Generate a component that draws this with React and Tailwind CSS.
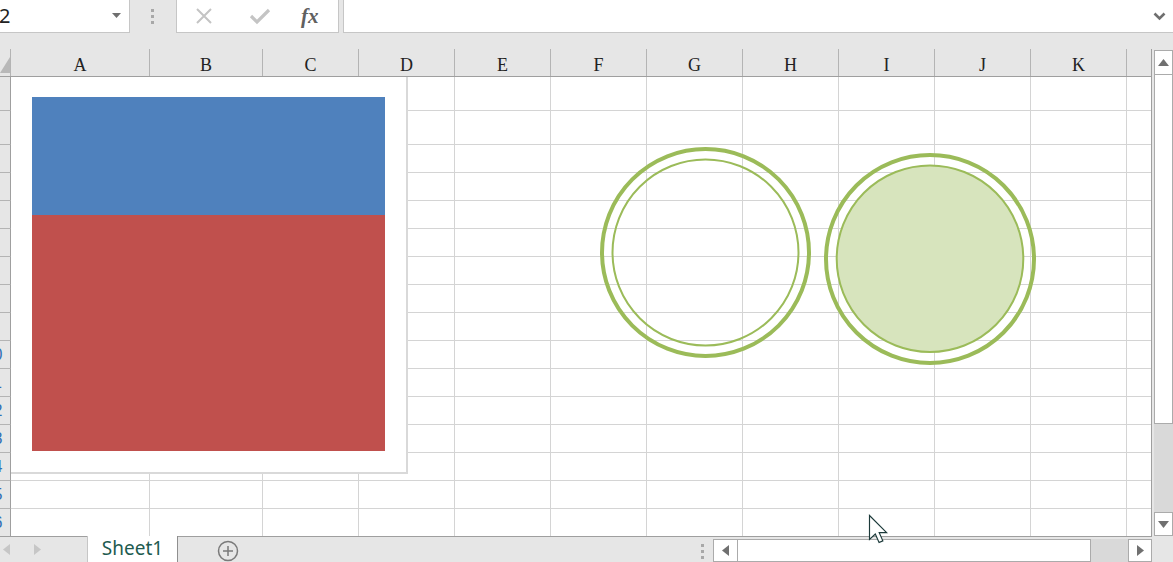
import React from "react";

const COLS = [
  { l: "A", w: 139 },
  { l: "B", w: 113 },
  { l: "C", w: 96 },
  { l: "D", w: 96 },
  { l: "E", w: 96 },
  { l: "F", w: 96 },
  { l: "G", w: 96 },
  { l: "H", w: 96 },
  { l: "I", w: 96 },
  { l: "J", w: 96 },
  { l: "K", w: 96 },
];

const ROWS = Array.from({ length: 16 }, (_, i) => ({ n: i + 1, h: i < 2 ? 34 : 28 }));

function FormulaBar() {
  return (
    <div className="flex h-[33px]">
      <div className="relative flex h-full w-[130px] items-center border-r border-b border-[#c6c6c6] bg-white">
        <span className="-ml-[1px] text-[20px] leading-none text-[#222] font-['Noto_Sans',sans-serif]">2</span>
        <svg className="absolute left-[112px] top-[13px]" width="9" height="6" viewBox="0 0 9 6">
          <path d="M0 0 L9 0 L4.5 5 Z" fill="#6f6f6f" />
        </svg>
      </div>
      <div className="flex w-[46px] flex-col items-center justify-center gap-[3px] pr-[1px]">
        <div className="h-[3px] w-[3px] bg-[#a8a8a8]" />
        <div className="h-[3px] w-[3px] bg-[#a8a8a8]" />
        <div className="h-[3px] w-[3px] bg-[#a8a8a8]" />
      </div>
      <div className="flex h-full w-[163px] items-center border-x border-b border-[#c6c6c6] bg-white">
        <svg className="ml-[17px]" width="20" height="20" viewBox="0 0 20 20">
          <path d="M3 3 L17 17 M17 3 L3 17" stroke="#c4c4c4" strokeWidth="2" fill="none" />
        </svg>
        <svg className="ml-[35px]" width="22" height="20" viewBox="0 0 22 20">
          <path d="M2 10 L8 16 L20 4" stroke="#c4c4c4" strokeWidth="3.2" fill="none" />
        </svg>
        <span className="ml-[30px] text-[21px] italic leading-none text-[#606060] font-['Liberation_Serif',serif] font-bold">fx</span>
      </div>
      <div className="w-[4px]" />
      <div className="relative flex h-full flex-1 items-center border-l border-b border-[#c6c6c6] bg-white">
        <svg className="absolute right-[7px] top-[12px]" width="13" height="9" viewBox="0 0 13 9">
          <path d="M1.5 1.5 L6.5 6.5 L11.5 1.5" stroke="#6f6f6f" strokeWidth="2.6" fill="none" />
        </svg>
      </div>
    </div>
  );
}

function ColumnHeader() {
  return (
    <div className="flex h-[28px] border-b border-[#9f9f9f]">
      <div className="relative h-full w-[11px] border-r border-[#b4b4b4]">
        <svg className="absolute left-0 top-[4px]" width="10" height="20" viewBox="0 0 10 20">
          <path d="M0 20 L10 20 L10 4 Z" fill="#b8b8b8" />
        </svg>
      </div>
      {COLS.map((c) => (
        <div
          key={c.l}
          style={{ width: c.w }}
          className="flex h-full items-center justify-center border-r border-[#b4b4b4] pt-[4px] text-[18px] leading-none text-[#222] font-['Liberation_Serif',serif]"
        >
          {c.l}
        </div>
      ))}
      <div className="h-full flex-1" />
    </div>
  );
}

function Grid() {
  return (
    <div className="h-[459px] overflow-hidden">
      {ROWS.map((r) => (
        <div key={r.n} style={{ height: r.h }} className="flex">
          <div className="flex h-full w-[11px] shrink-0 items-center justify-end overflow-hidden border-r border-b border-r-[#9f9f9f] border-b-[#b4b4b4] bg-[#e6e6e6]">
            <span className="w-[33px] shrink-0 text-center text-[16px] leading-none text-[#2f6fb5] font-['Liberation_Sans',sans-serif]">
              {r.n}
            </span>
          </div>
          {COLS.map((c) => (
            <div
              key={c.l}
              style={{ width: c.w }}
              className="h-full shrink-0 border-r border-b border-[#d4d4d4] bg-white"
            />
          ))}
          <div className="h-full flex-1 border-b border-[#d4d4d4] bg-white" />
        </div>
      ))}
    </div>
  );
}

function VScroll() {
  return (
    <div className="ml-[2px] flex w-[19px] flex-col">
      <div className="h-[1px]" />
      <div className="flex h-[25px] items-center justify-center border border-[#ababab] bg-white">
        <svg width="11" height="7" viewBox="0 0 11 7">
          <path d="M0 7 L11 7 L5.5 0 Z" fill="#707070" />
        </svg>
      </div>
      <div className="h-[349px] border-x border-b border-[#ababab] bg-white" />
      <div className="h-[88px] bg-[#d9d9d9]" />
      <div className="flex h-[24px] items-center justify-center border border-[#ababab] bg-white">
        <svg width="11" height="7" viewBox="0 0 11 7">
          <path d="M0 0 L11 0 L5.5 7 Z" fill="#707070" />
        </svg>
      </div>
    </div>
  );
}

function SheetBar() {
  return (
    <div className="flex h-[26px]">
      <div className="flex w-[87px] items-center border-t border-[#9f9f9f]">
        <svg className="ml-[3px]" width="7" height="11" viewBox="0 0 7 11">
          <path d="M7 0 L7 11 L0 5.5 Z" fill="#c6c6c6" />
        </svg>
        <svg className="ml-[24px]" width="7" height="11" viewBox="0 0 7 11">
          <path d="M0 0 L0 11 L7 5.5 Z" fill="#c6c6c6" />
        </svg>
      </div>
      <div className="flex w-[91px] items-center justify-center border-x border-l-[#c6c6c6] border-r-[#8f8f8f] bg-white pb-[1px]">
        <span className="text-[19px] leading-none text-[#1e5b50] font-['Noto_Sans',sans-serif]">Sheet1</span>
      </div>
      <div className="flex w-[516px] items-center border-t border-[#9f9f9f]">
        <svg className="ml-[39px] mt-[3px]" width="22" height="22" viewBox="0 0 22 22">
          <circle cx="11" cy="11" r="9.5" stroke="#7a7a7a" strokeWidth="1.5" fill="none" />
          <path d="M11 6 L11 16 M6 11 L16 11" stroke="#7a7a7a" strokeWidth="1.5" />
        </svg>
      </div>
      <div className="flex w-[19px] flex-col items-center justify-center gap-[3px] border-t border-[#9f9f9f] pr-[2px] pt-[3px]">
        <div className="h-[3px] w-[3px] bg-[#a8a8a8]" />
        <div className="h-[3px] w-[3px] bg-[#a8a8a8]" />
        <div className="h-[3px] w-[3px] bg-[#a8a8a8]" />
      </div>
      <div className="flex w-[439px] flex-col border-t border-[#9f9f9f]">
        <div className="h-[2px]" />
        <div className="flex flex-1">
          <div className="flex w-[25px] items-center justify-center border border-[#ababab] bg-white">
            <svg width="7" height="11" viewBox="0 0 7 11">
              <path d="M7 0 L7 11 L0 5.5 Z" fill="#707070" />
            </svg>
          </div>
          <div className="w-[353px] border-y border-r border-[#ababab] bg-white" />
          <div className="w-[37px] bg-[#d9d9d9]" />
          <div className="flex w-[24px] items-center justify-center border border-[#ababab] bg-white">
            <svg width="7" height="11" viewBox="0 0 7 11">
              <path d="M0 0 L0 11 L7 5.5 Z" fill="#707070" />
            </svg>
          </div>
        </div>
      </div>
      <div className="flex-1" />
    </div>
  );
}

export default function App() {
  return (
    <div className="relative h-[562px] w-[1173px] overflow-hidden bg-[#e6e6e6] font-['Liberation_Sans',sans-serif]">
      <FormulaBar />
      <div className="h-[16px]" />
      <div className="flex h-[487px]">
        <div className="w-[1152px] border-r border-[#9f9f9f]">
          <ColumnHeader />
          <Grid />
        </div>
        <VScroll />
      </div>
      <SheetBar />

      {/* Chart object */}
      <div className="absolute left-[11px] top-[77px] h-[397px] w-[397px] border-r-2 border-b-2 border-[#d9d9d9] bg-white pl-[21px] pt-[20px]">
        <div className="h-[118px] w-[353px] bg-[#4f81bd]" />
        <div className="h-[236px] w-[353px] bg-[#c0504d]" />
      </div>

      {/* Shapes and cursor */}
      <svg className="pointer-events-none absolute left-0 top-0" width="1173" height="562" viewBox="0 0 1173 562">
        <circle cx="705.5" cy="252.5" r="103.5" fill="none" stroke="#9bbb59" strokeWidth="4" />
        <circle cx="705.5" cy="252.5" r="93" fill="none" stroke="#9bbb59" strokeWidth="2" />
        <circle cx="930" cy="259" r="104" fill="none" stroke="#9bbb59" strokeWidth="4" />
        <circle cx="930" cy="258.7" r="93.3" fill="#d7e4bd" stroke="#9bbb59" strokeWidth="2" />
        <g transform="translate(869.5 515.5) scale(1.45)">
          <path d="M0 0 L0 16.5 L4 12.8 L6.6 18.6 L9.2 17.5 L6.7 11.8 L11.8 11.8 Z" fill="#ffffff" stroke="#1c3a3a" strokeWidth="0.8" strokeLinejoin="miter" />
        </g>
      </svg>
    </div>
  );
}
